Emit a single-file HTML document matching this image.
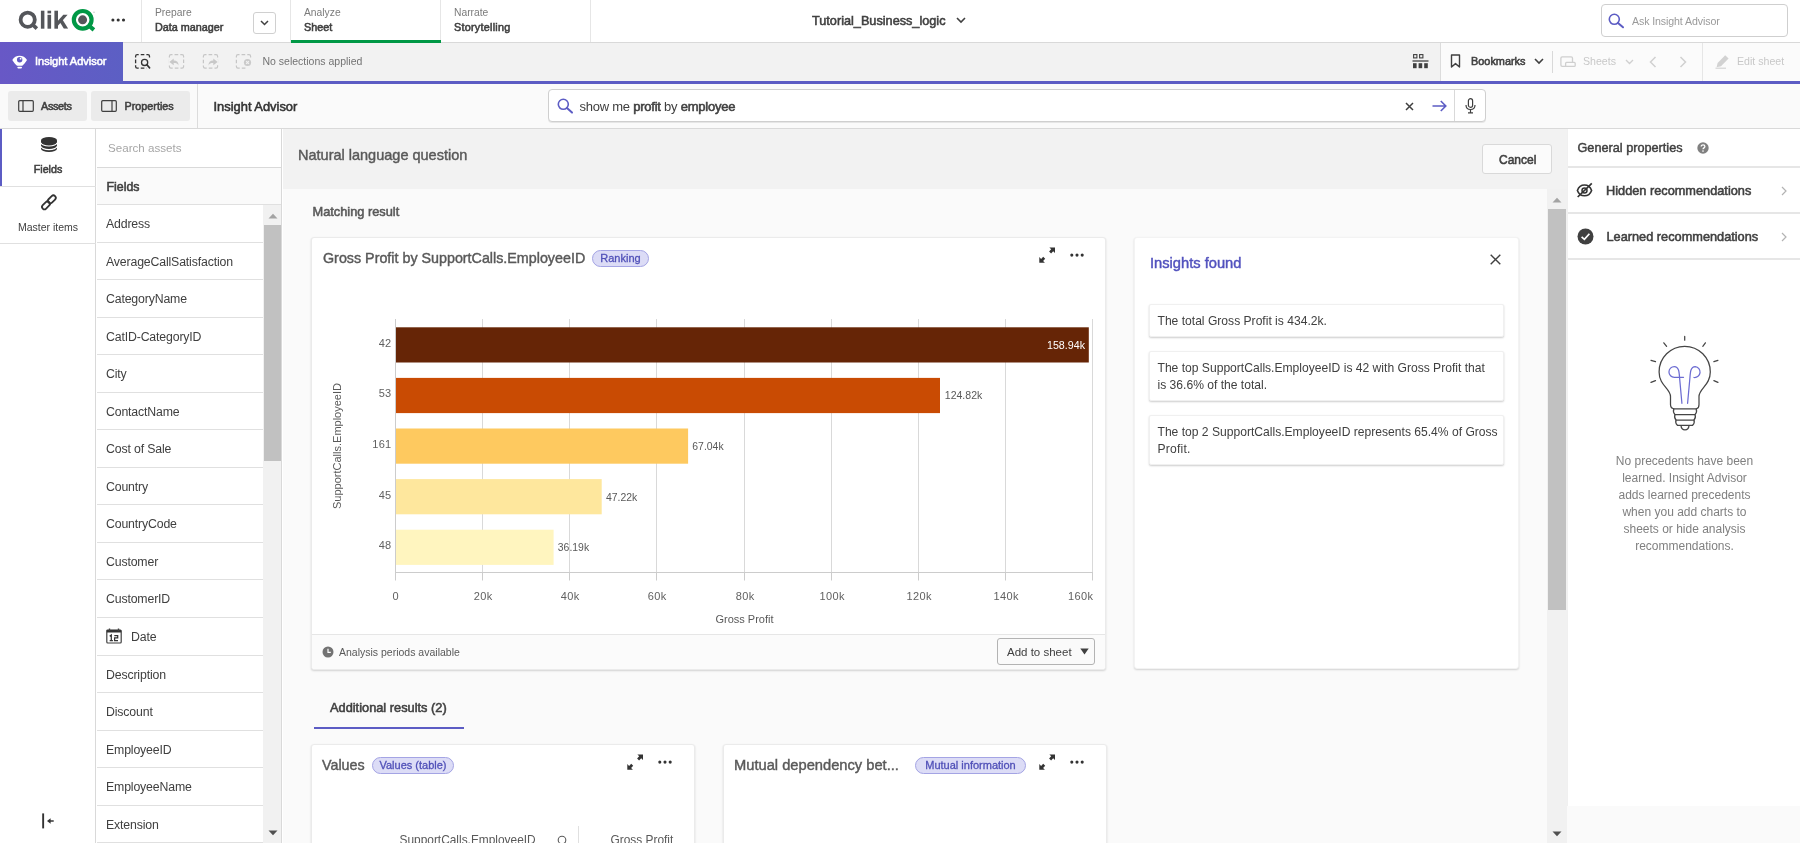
<!DOCTYPE html>
<html>
<head>
<meta charset="utf-8">
<title>Qlik Sense - Insight Advisor</title>
<style>
*{box-sizing:border-box;margin:0;padding:0}
html,body{width:1800px;height:843px;overflow:hidden;background:#fff}
body{font-family:"Liberation Sans",sans-serif;font-size:12px;color:#404040;position:relative}
#wrap{position:absolute;left:0;top:0;width:1800px;height:843px;will-change:transform}
.a{position:absolute}
.t{position:absolute;white-space:nowrap;line-height:1}
.b,.t b{font-weight:normal;-webkit-text-stroke:.55px}
svg{position:absolute;overflow:visible}
/* top bar */
#top{left:0;top:0;width:1800px;height:43px;background:#fff;border-bottom:1px solid #d9d9d9}
.vs{position:absolute;top:0;width:1px;height:42px;background:#e6e6e6}
/* toolbar */
#tb{left:0;top:43px;width:1800px;height:38px;background:#f2f2f2}
#pl{left:0;top:81px;width:1800px;height:3px;background:#5c5cc4}
#ia{left:0;top:42px;width:123px;height:42px;background:linear-gradient(90deg,#6858c6,#5c5fc4)}
/* third bar */
#b3{left:0;top:84px;width:1800px;height:45px;background:#fafafa;border-bottom:1px solid #d9d9d9}
.btn3{position:absolute;top:91px;height:30px;background:#ebebeb;border-radius:3px}
/* left nav */
#nav{left:0;top:129px;width:96px;height:714px;background:#fff;border-right:1px solid #d9d9d9}
#assets{left:97px;top:129px;width:185px;height:714px;background:#fff;border-right:1px solid #d9d9d9}
.row{position:absolute;left:97px;width:166px;border-bottom:1px solid #e0e0e0}
.row span{position:absolute;left:9px;top:13px;font-size:12.3px;line-height:1;color:#404040;white-space:nowrap;letter-spacing:-0.15px}
/* main */
#main{left:283px;top:129px;width:1284px;height:714px;background:#fafafa}
#nlq{left:283px;top:129px;width:1284px;height:60px;background:#f2f2f2}
.card{position:absolute;background:#fff;border:1px solid #ebebeb;border-radius:3px;box-shadow:0 1px 2px rgba(0,0,0,.16)}
.badge{position:absolute;height:16.5px;border:1px solid #a4a4e4;background:#dcdcf6;border-radius:9px;color:#5050b8;font-size:11px;line-height:14.5px;text-align:center;white-space:nowrap;-webkit-text-stroke:.3px}
/* right panel */
#right{left:1567px;top:129px;width:233px;height:714px;background:#fff;border-left:1px solid #f0f0f0}
</style>
</head>
<body>
<div id="wrap">
<!-- TOP BAR -->
<div class="a" id="top"></div>
<div class="vs" style="left:141px"></div>
<div class="vs" style="left:290px"></div>
<div class="vs" style="left:440px"></div>
<div class="vs" style="left:590px"></div>
<!-- Qlik logo -->
<svg style="left:0;top:0" width="130" height="42" viewBox="0 0 130 42">
<defs><clipPath id="kc"><rect x="54" y="10.7" width="15" height="18"/></clipPath></defs>
<g fill="#54565a">
<circle cx="27.700" cy="19.700" r="7.100" fill="none" stroke="#54565a" stroke-width="3.800"/>
<path d="M30.600 25.200 L33.400 22.700 L38.100 27.300 L35.600 30 Z"/>
<rect x="40.900" y="10.700" width="3.500" height="18"/>
<rect x="47.500" y="10.700" width="3.600" height="2.700"/><rect x="47.500" y="14.800" width="3.600" height="13.900"/>
<rect x="54.400" y="10.700" width="3.600" height="18"/>
<g clip-path="url(#kc)"><path d="M57.500 21.300 L63.300 14.800 H67.600 L57.500 26.200 Z"/><path d="M59.800 22 L62.300 19.200 L68.200 28.700 H63.900 Z"/></g>
</g>
<circle cx="82.700" cy="19.850" r="8.850" fill="none" stroke="#009845" stroke-width="4.200"/>
<path d="M87.600 27.200 L90.400 24.300 L95.200 28.300 L92.600 31.400 Z" fill="#009845"/>
<circle cx="82.600" cy="19.850" r="4.500" fill="#54565a"/>
<circle cx="94" cy="12.200" r="0.800" fill="#c8c8c8"/>
</svg>
<svg style="left:111px;top:18px" width="14" height="4" viewBox="0 0 14 4"><circle cx="1.9" cy="2" r="1.55" fill="#333"/><circle cx="7.2" cy="2" r="1.55" fill="#333"/><circle cx="12.5" cy="2" r="1.55" fill="#333"/></svg>
<!-- tabs -->
<div class="t" style="left:155px;top:7.5px;font-size:10.3px;color:#7b7b7b">Prepare</div>
<div class="t b" style="left:155px;top:21.5px;font-size:10.8px;color:#404040">Data manager</div>
<div class="a" style="left:253px;top:12px;width:23px;height:22px;border:1px solid #d0d0d0;border-radius:3px;background:#fff"></div>
<svg style="left:260px;top:20px" width="9" height="6" viewBox="0 0 9 6"><path d="M1 1 L4.5 4.5 L8 1" fill="none" stroke="#404040" stroke-width="1.5"/></svg>
<div class="t" style="left:304px;top:7.5px;font-size:10.3px;color:#7b7b7b">Analyze</div>
<div class="t b" style="left:304px;top:21.5px;font-size:10.8px;color:#404040">Sheet</div>
<div class="a" style="left:291px;top:40px;width:150px;height:3px;background:#009845"></div>
<div class="t" style="left:454px;top:7.5px;font-size:10.3px;color:#7b7b7b">Narrate</div>
<div class="t b" style="left:454px;top:21.5px;font-size:10.8px;color:#404040;letter-spacing:.26px">Storytelling</div>
<div class="t b" style="left:812px;top:14.5px;font-size:12.7px;color:#404040">Tutorial_Business_logic</div>
<svg style="left:956px;top:17px" width="10" height="7" viewBox="0 0 10 7"><path d="M1 1 L5 5 L9 1" fill="none" stroke="#404040" stroke-width="1.6"/></svg>
<!-- ask box -->
<div class="a" style="left:1601px;top:4px;width:187px;height:33px;border:1px solid #cfcfcf;border-radius:4px;background:#fff"></div>
<svg style="left:1608px;top:13px" width="16" height="15" viewBox="0 0 16 15"><circle cx="6.3" cy="6.3" r="5" fill="none" stroke="#5c5cc4" stroke-width="1.6"/><path d="M10 10 L15 14.3" stroke="#5c5cc4" stroke-width="2" stroke-linecap="round"/></svg>
<div class="t" style="left:1632px;top:16px;font-size:10.6px;letter-spacing:-.1px;color:#9a9a9a">Ask Insight Advisor</div>

<!-- TOOLBAR -->
<div class="a" id="tb"></div>
<div class="a" id="pl"></div>
<div class="a" id="ia"></div>
<svg style="left:12px;top:54px" width="16" height="15" viewBox="12 54 16 15"><path d="M12.300 60 C15 54.200 24.200 54.200 27 60 C25.600 62.800 23.500 64.300 22.300 65.800 H17 C15.800 64.300 13.700 62.800 12.300 60 Z" fill="#fff"/><circle cx="19.650" cy="59.700" r="2.700" fill="#6159c5"/><circle cx="20.600" cy="58.700" r="0.900" fill="#fff"/><rect x="17.300" y="66.700" width="4.700" height="1.700" rx="0.800" fill="#fff"/></svg>
<div class="t b" style="left:35px;top:56px;font-size:11px;color:#fff">Insight Advisor</div>
<!-- selection icons -->
<svg style="left:134px;top:53px" width="18" height="17" viewBox="134 53 18 17"><rect x="135.600" y="54.600" width="13.900" height="13.600" rx="1.600" fill="none" stroke="#333" stroke-width="1.300" pathLength="60" stroke-dasharray="6 2.400 4.200 2.400" stroke-dashoffset="4.250"/><rect x="146.300" y="58" width="5" height="12" fill="#f2f2f2"/><circle cx="144.600" cy="62.400" r="4.600" fill="#f2f2f2"/><circle cx="144.600" cy="62.400" r="3.100" fill="none" stroke="#333" stroke-width="1.300"/><path d="M146.900 64.800 L149.600 67.900" stroke="#333" stroke-width="1.600" stroke-linecap="round"/></svg>
<svg style="left:168px;top:53px" width="18" height="17" viewBox="0 0 18 17"><rect x="1.400" y="1.600" width="14.200" height="13.600" rx="1.600" fill="none" stroke="#c6c6c6" stroke-width="1.200" pathLength="60" stroke-dasharray="6 2.400 4.200 2.400" stroke-dashoffset="4.250"/><rect x="0.500" y="6.300" width="2" height="5.400" fill="#f2f2f2"/><path d="M1.400 9 L5.700 5.600 V7.600 C9 7.600 10.500 9.200 10.500 12.400 C9.500 10.600 8.400 10 5.700 10 V12.200 Z" fill="#c8c8c8"/></svg>
<svg style="left:202px;top:53px" width="18" height="17" viewBox="0 0 18 17"><rect x="1.400" y="1.600" width="14.200" height="13.600" rx="1.600" fill="none" stroke="#c6c6c6" stroke-width="1.200" pathLength="60" stroke-dasharray="6 2.400 4.200 2.400" stroke-dashoffset="4.250"/><rect x="14.500" y="6.300" width="2" height="5.400" fill="#f2f2f2"/><path d="M15.600 9 L11.300 5.600 V7.600 C8 7.600 6.500 9.200 6.500 12.400 C7.500 10.600 8.600 10 11.300 10 V12.200 Z" fill="#c8c8c8"/></svg>
<svg style="left:235px;top:53px" width="18" height="17" viewBox="0 0 18 17"><rect x="1.400" y="1.600" width="14.200" height="13.600" rx="1.600" fill="none" stroke="#c6c6c6" stroke-width="1.200" pathLength="60" stroke-dasharray="6 2.400 4.200 2.400" stroke-dashoffset="4.250"/><rect x="12" y="5.500" width="5" height="11" fill="#f2f2f2"/><circle cx="12.500" cy="9.500" r="3.600" fill="#cacaca"/><path d="M11.100 8.100 L13.900 10.900 M13.900 8.100 L11.100 10.900" stroke="#f2f2f2" stroke-width="1.100"/></svg>
<div class="t" style="left:262.5px;top:56px;font-size:10.5px;color:#737373">No selections applied</div>
<!-- right part of toolbar -->
<svg style="left:1412px;top:54px" width="17" height="15" viewBox="0 0 17 15"><rect x="1.6" y="0.6" width="3.3" height="3.3" fill="none" stroke="#404040" stroke-width="1.1"/><rect x="7.6" y="0.6" width="3.3" height="3.3" fill="none" stroke="#404040" stroke-width="1.1"/><path d="M0.5 7 H16.5" stroke="#404040" stroke-width="1.3"/><rect x="1" y="9.2" width="3.6" height="5" fill="#404040"/><rect x="6.6" y="9.2" width="3.6" height="5" fill="#404040"/><rect x="12.2" y="9.2" width="3.6" height="5" fill="#404040"/></svg>
<div class="a" style="left:1440px;top:43px;width:360px;height:38px;background:#fbfbfb;border-left:1px solid #dcdcdc"></div>
<svg style="left:1450px;top:54px" width="12" height="15" viewBox="0 0 12 15"><path d="M1.5 1 H9.5 V13 L5.5 9.6 L1.5 13 Z" fill="none" stroke="#404040" stroke-width="1.4" stroke-linejoin="round"/></svg>
<div class="t b" style="left:1471px;top:56px;font-size:10.9px;color:#404040">Bookmarks</div>
<svg style="left:1534px;top:58px" width="10" height="7" viewBox="0 0 10 7"><path d="M1 1 L5 5 L9 1" fill="none" stroke="#404040" stroke-width="1.6"/></svg>
<div class="a" style="left:1552px;top:51px;width:1px;height:22px;background:#d9d9d9"></div>
<svg style="left:1560px;top:55.500px" width="16" height="12" viewBox="0 0 16 12"><rect x="0.900" y="0.900" width="11.600" height="9.500" rx="1.300" fill="none" stroke="#cfcfcf" stroke-width="1.300"/><rect x="5.600" y="6.400" width="9.600" height="4" rx="1" fill="#fbfbfb" stroke="#cfcfcf" stroke-width="1.300"/></svg>
<div class="t" style="left:1583px;top:56px;font-size:10.6px;color:#c8c8c8">Sheets</div>
<svg style="left:1625px;top:59px" width="9" height="6" viewBox="0 0 9 6"><path d="M1 1 L4.5 4.5 L8 1" fill="none" stroke="#d0d0d0" stroke-width="1.4"/></svg>
<svg style="left:1649px;top:56px" width="8" height="12" viewBox="0 0 8 12"><path d="M6.5 1 L1.5 6 L6.5 11" fill="none" stroke="#d0d0d0" stroke-width="1.5"/></svg>
<svg style="left:1679px;top:56px" width="8" height="12" viewBox="0 0 8 12"><path d="M1.5 1 L6.5 6 L1.5 11" fill="none" stroke="#d0d0d0" stroke-width="1.5"/></svg>
<div class="a" style="left:1702px;top:43px;width:1px;height:38px;background:#e6e6e6"></div>
<svg style="left:1715px;top:54px" width="15" height="15" viewBox="0 0 15 15"><path d="M2.600 9 L10.200 1.200 L13.600 4.600 L6 12.200 L1.600 13.200 Z" fill="#d2d2d2"/><path d="M0.500 14.200 H11" stroke="#d2d2d2" stroke-width="1.100"/></svg>
<div class="t" style="left:1737px;top:56px;font-size:10.6px;color:#c8c8c8">Edit sheet</div>

<!-- THIRD BAR -->
<div class="a" id="b3"></div>
<div class="btn3" style="left:8px;width:79px"></div>
<div class="btn3" style="left:91px;width:99px"></div>
<svg style="left:18px;top:100px" width="16" height="12" viewBox="0 0 16 12"><rect x="0.7" y="0.7" width="14.6" height="10.6" rx="1" fill="none" stroke="#404040" stroke-width="1.2"/><path d="M5 0.7 V11.3" stroke="#404040" stroke-width="1.2"/></svg>
<div class="t b" style="left:41px;top:100.75px;font-size:10.8px;color:#404040;letter-spacing:-.3px">Assets</div>
<svg style="left:101px;top:100px" width="16" height="12" viewBox="0 0 16 12"><rect x="0.7" y="0.7" width="14.6" height="10.6" rx="1" fill="none" stroke="#404040" stroke-width="1.2"/><path d="M11 0.7 V11.3" stroke="#404040" stroke-width="1.2"/></svg>
<div class="t b" style="left:124.5px;top:100.75px;font-size:10.8px;color:#404040">Properties</div>
<div class="a" style="left:197px;top:84px;width:1px;height:44px;background:#dcdcdc"></div>
<div class="t b" style="left:213.5px;top:100.5px;font-size:12.9px;color:#333">Insight Advisor</div>
<!-- search box -->
<div class="a" style="left:548px;top:89px;width:938px;height:33px;border:1px solid #cfcfcf;border-radius:4px;background:#fff;box-shadow:0 1px 0 rgba(0,0,0,.08)"></div>
<svg style="left:557px;top:98px" width="16" height="16" viewBox="0 0 16 16"><circle cx="6.3" cy="6.3" r="5" fill="none" stroke="#5c5cc4" stroke-width="1.6"/><path d="M10 10 L15 14.6" stroke="#5c5cc4" stroke-width="2" stroke-linecap="round"/></svg>
<div class="t" style="left:579.5px;top:100px;font-size:13px;letter-spacing:-.24px;color:#404040">show me <b>profit</b> by <b>employee</b></div>
<svg style="left:1405px;top:102px" width="9" height="9" viewBox="0 0 9 9"><path d="M1 1 L8 8 M8 1 L1 8" stroke="#404040" stroke-width="1.5"/></svg>
<svg style="left:1432px;top:100px" width="15" height="12" viewBox="0 0 15 12"><path d="M0.5 6 H13.5 M8.8 1 L13.8 6 L8.8 11" fill="none" stroke="#5c5cc4" stroke-width="1.6"/></svg>
<div class="a" style="left:1454px;top:90px;width:1px;height:31px;background:#d9d9d9"></div>
<svg style="left:1465px;top:98px" width="11" height="16" viewBox="0 0 11 16"><rect x="3.4" y="0.7" width="4.2" height="8.6" rx="2.1" fill="none" stroke="#404040" stroke-width="1.2"/><path d="M1 7 C1 13 10 13 10 7 M5.5 11.6 V14.6 M3 14.8 H8" fill="none" stroke="#404040" stroke-width="1.2"/></svg>

<!-- LEFT NAV -->
<div class="a" id="nav"></div>
<div class="a" id="assets"></div>
<!-- nav items -->
<div class="a" style="left:0;top:129px;width:96px;height:58px;border-bottom:1px solid #e0e0e0"></div>
<div class="a" style="left:0;top:129px;width:2px;height:57px;background:#5c5cc4"></div>
<svg style="left:41px;top:136.500px" width="16" height="15" viewBox="0 0 15.500 14.500"><path d="M0 3.200 A7.750 3.200 0 0 1 15.500 3.200 V11.300 A7.750 3.200 0 0 1 0 11.300 Z" fill="#333"/><path d="M0 5.500 A7.750 3.200 0 0 0 15.500 5.500 M0 9 A7.750 3.200 0 0 0 15.500 9" fill="none" stroke="#fff" stroke-width="1.200"/></svg>
<div class="t b" style="left:0;top:164px;width:96px;text-align:center;font-size:10.7px;color:#404040">Fields</div>
<div class="a" style="left:0;top:187px;width:96px;height:57px;border-bottom:1px solid #e0e0e0"></div>
<svg style="left:40px;top:193px" width="18" height="18" viewBox="40 193 18 18"><g fill="none" stroke="#333" stroke-width="1.800"><rect x="-4.600" y="-2.400" width="9.200" height="4.800" rx="2.400" transform="translate(46,205.300) rotate(-45)"/><rect x="-4.600" y="-2.400" width="9.200" height="4.800" rx="2.400" transform="translate(51.800,199.400) rotate(-45)"/></g></svg>
<div class="t" style="left:0;top:222px;width:96px;text-align:center;font-size:10.5px;color:#404040">Master items</div>
<svg style="left:41px;top:813px" width="14" height="16" viewBox="41 813 14 16"><path d="M43.150 813.400 V828.400" stroke="#333" stroke-width="1.900"/><path d="M49 821 H53.700" stroke="#333" stroke-width="1.500"/><path d="M47 821 L50.600 818.200 V823.800 Z" fill="#333"/></svg>
<!-- assets -->
<div class="t" style="left:108px;top:142px;font-size:11.6px;color:#a6a6a6">Search assets</div>
<div class="a" style="left:97px;top:167px;width:184px;height:1px;background:#d9d9d9"></div>
<div class="a" style="left:97px;top:168px;width:184px;height:37px;background:#fafafa;border-bottom:1px solid #e0e0e0"></div>
<div class="t b" style="left:106.500px;top:180.75px;font-size:12.4px;color:#404040">Fields</div>
<div class="a" style="left:263px;top:205px;width:18px;height:638px;background:#f1f1f1"></div>
<div class="a" style="left:264px;top:225px;width:17px;height:236px;background:#c1c1c1"></div>
<svg style="left:267.500px;top:212.500px" width="10" height="6" viewBox="0 0 10 6"><path d="M0.5 5.5 L5 0.8 L9.5 5.5 Z" fill="#a3a3a3"/></svg>
<svg style="left:267.500px;top:829.500px" width="10" height="6" viewBox="0 0 10 6"><path d="M0.5 0.5 L5 5.2 L9.5 0.5 Z" fill="#505050"/></svg>
<div class="row" style="top:205px;height:38px"><span>Address</span></div>
<div class="row" style="top:243px;height:37px"><span>AverageCallSatisfaction</span></div>
<div class="row" style="top:280px;height:38px"><span>CategoryName</span></div>
<div class="row" style="top:318px;height:37px"><span>CatID-CategoryID</span></div>
<div class="row" style="top:355px;height:38px"><span>City</span></div>
<div class="row" style="top:393px;height:37px"><span>ContactName</span></div>
<div class="row" style="top:430px;height:38px"><span>Cost of Sale</span></div>
<div class="row" style="top:468px;height:37px"><span>Country</span></div>
<div class="row" style="top:505px;height:38px"><span>CountryCode</span></div>
<div class="row" style="top:543px;height:37px"><span>Customer</span></div>
<div class="row" style="top:580px;height:38px"><span>CustomerID</span></div>
<div class="row" style="top:618px;height:38px"><svg style="left:9px;top:10px" width="16" height="16" viewBox="0 0 16 16"><rect x="0.8" y="2" width="14.4" height="13" rx="1" fill="none" stroke="#404040" stroke-width="1.2"/><path d="M0.8 3.200 H15.2" stroke="#333" stroke-width="2.600"/><path d="M3.5 0.5 V3 M12.5 0.5 V3" stroke="#404040" stroke-width="1.4"/><path d="M3.700 8.300 L5.300 7.100 V12.500 M3.700 12.600 H6.900 M8.300 7.500 H11.700 V9.900 H8.600 V12.500 H12" fill="none" stroke="#333" stroke-width="1.250"/></svg><span style="left:34px">Date</span></div>
<div class="row" style="top:656px;height:37px"><span>Description</span></div>
<div class="row" style="top:693px;height:38px"><span>Discount</span></div>
<div class="row" style="top:731px;height:37px"><span>EmployeeID</span></div>
<div class="row" style="top:768px;height:38px"><span>EmployeeName</span></div>
<div class="row" style="top:806px;height:37px"><span>Extension</span></div>

<!-- MAIN -->
<div class="a" id="main"></div>
<div class="a" id="nlq"></div>
<div class="t" style="left:298px;top:148px;font-size:14.5px;color:#595959;-webkit-text-stroke:.42px">Natural language question</div>
<div class="a" style="left:1482px;top:144px;width:70px;height:30px;border:1px solid #d9d9d9;border-radius:3px;background:#fbfbfb"></div>
<div class="t b" style="left:1499px;top:153.75px;font-size:12.0px;color:#404040">Cancel</div>
<!-- main scrollbar -->
<div class="a" style="left:1547px;top:189px;width:20px;height:654px;background:#f1f1f1"></div>
<div class="a" style="left:1548px;top:209px;width:18px;height:401px;background:#c1c1c1"></div>
<svg style="left:1552px;top:196.500px" width="10" height="6" viewBox="0 0 10 6"><path d="M0.5 5.5 L5 0.8 L9.5 5.5 Z" fill="#a3a3a3"/></svg>
<svg style="left:1552px;top:830.500px" width="10" height="6" viewBox="0 0 10 6"><path d="M0.5 0.5 L5 5.2 L9.5 0.5 Z" fill="#505050"/></svg>
<div class="t b" style="left:312.5px;top:206px;font-size:12.8px;color:#595959">Matching result</div>
<!-- chart card -->
<div class="card" style="left:311px;top:237px;width:795px;height:433px"></div>
<div class="t" style="left:323px;top:250.5px;font-size:14.3px;color:#595959;-webkit-text-stroke:.42px">Gross Profit by SupportCalls.EmployeeID</div>
<div class="badge" style="left:592px;top:250px;width:57px">Ranking</div>
<svg style="left:1039px;top:247px" width="16" height="16" viewBox="0 0 16 16"><g fill="#333"><path d="M10.4 0.5 H16 V6.100 L14.200 4.300 L12.100 6.500 L10.100 4.500 L12.200 2.300 Z"/><path d="M5.900 15.700 H0.300 V10.100 L2.100 11.900 L4.200 9.700 L6.200 11.700 L4.100 13.900 Z"/></g></svg>
<svg style="left:1070px;top:253px" width="14" height="4" viewBox="0 0 14 4"><circle cx="1.8" cy="2.100" r="1.55" fill="#333"/><circle cx="7" cy="2.100" r="1.55" fill="#333"/><circle cx="12.200" cy="2.100" r="1.55" fill="#333"/></svg>
<!-- chart -->
<svg style="left:312px;top:300px" width="793" height="334" viewBox="312 300 793 334" font-family="Liberation Sans, sans-serif" font-size="11" fill="#595959">
<g stroke="#d9d9d9" stroke-width="1">
<path d="M482.5 319 V572 M569.5 319 V572 M656.5 319 V572 M744.5 319 V572 M831.5 319 V572 M918.5 319 V572 M1005.5 319 V572 M1092.5 319 V572"/>
</g>
<rect x="396" y="327.300" width="692.800" height="35.200" fill="#662506"/>
<rect x="396" y="377.900" width="544.000" height="35.200" fill="#c94b03"/>
<rect x="396" y="428.500" width="292.100" height="35.200" fill="#fec95f"/>
<rect x="396" y="479.100" width="205.700" height="35.200" fill="#fee79d"/>
<rect x="396" y="529.700" width="157.600" height="35.200" fill="#fff5bf"/>
<path d="M395.5 319 V580.500 M395.5 572.5 H1093 M482.5 572 V580.500 M569.5 572 V580.500 M656.5 572 V580.500 M744.5 572 V580.500 M831.5 572 V580.500 M918.5 572 V580.500 M1005.5 572 V580.500 M1092.5 572 V580.500" stroke="#cccccc" stroke-width="1" fill="none"/>
<g text-anchor="end" letter-spacing=".3" fill="#616161"><text x="391.500" y="346.800">42</text><text x="391.500" y="397.400">53</text><text x="391.500" y="448">161</text><text x="391.500" y="498.600">45</text><text x="391.500" y="549.300">48</text></g>
<g text-anchor="middle" letter-spacing=".4" fill="#616161"><text x="395.700" y="599.500">0</text><text x="483.200" y="599.500">20k</text><text x="570.200" y="599.500">40k</text><text x="657.200" y="599.500">60k</text><text x="745.200" y="599.500">80k</text><text x="832.200" y="599.500">100k</text><text x="919.200" y="599.500">120k</text><text x="1006.200" y="599.500">140k</text></g>
<text x="1093.500" y="599.500" text-anchor="end" letter-spacing=".4" fill="#616161">160k</text>
<text x="1047" y="349" fill="#fff" textLength="38" lengthAdjust="spacingAndGlyphs">158.94k</text>
<text x="944.800" y="399.300" textLength="37.5" lengthAdjust="spacingAndGlyphs">124.82k</text><text x="692.300" y="450" textLength="31.3" lengthAdjust="spacingAndGlyphs">67.04k</text><text x="606" y="500.500" textLength="31.3" lengthAdjust="spacingAndGlyphs">47.22k</text><text x="557.800" y="551.200" textLength="31.3" lengthAdjust="spacingAndGlyphs">36.19k</text>
<text x="744.500" y="623" text-anchor="middle" font-family="Liberation Sans, sans-serif" font-size="11">Gross Profit</text>
<text transform="translate(341,446) rotate(-90)" text-anchor="middle" font-family="Liberation Sans, sans-serif" font-size="11">SupportCalls.EmployeeID</text>
</svg>
<!-- card footer -->
<div class="a" style="left:312px;top:634px;width:793px;height:35px;background:#fbfbfb;border-top:1px solid #e6e6e6;border-radius:0 0 3px 3px"></div>
<svg style="left:322px;top:646px" width="12" height="12" viewBox="0 0 12 12"><circle cx="6" cy="6" r="5.5" fill="#737373"/><path d="M6 2.8 V6.3 H8.8" fill="none" stroke="#fff" stroke-width="1.2"/></svg>
<div class="t" style="left:339px;top:646.75px;font-size:10.5px;color:#595959">Analysis periods available</div>
<div class="a" style="left:997px;top:638px;width:98px;height:27px;border:1px solid #b3b3b3;border-radius:3px;background:#fafafa"></div>
<div class="t" style="left:1007px;top:646.5px;font-size:11.5px;color:#404040">Add to sheet</div>
<svg style="left:1080px;top:648px" width="9" height="7" viewBox="0 0 9 7"><path d="M0.3 0.5 H8.7 L4.5 6.5 Z" fill="#404040"/></svg>
<!-- insights card -->
<div class="card" style="left:1134px;top:237px;width:385px;height:432px;border-color:#f3f3f3"></div>
<div class="t" style="left:1150px;top:256px;font-size:14.7px;color:#5252be;-webkit-text-stroke:.45px">Insights found</div>
<svg style="left:1490px;top:254px" width="11" height="11" viewBox="0 0 11 11"><path d="M0.7 0.7 L10.3 10.3 M10.3 0.7 L0.7 10.3" stroke="#404040" stroke-width="1.4"/></svg>
<div class="card" style="left:1149px;top:304px;width:355px;height:33px;border-radius:2px;border-color:#f0f0f0;box-shadow:0 1px 2px rgba(0,0,0,.2)"></div>
<div class="t" style="left:1157.5px;top:315px;font-size:12.1px;color:#404040">The total Gross Profit is 434.2k.</div>
<div class="card" style="left:1149px;top:351px;width:355px;height:50px;border-radius:2px;border-color:#f0f0f0;box-shadow:0 1px 2px rgba(0,0,0,.2)"></div>
<div class="t" style="left:1157.5px;top:362px;font-size:12.1px;color:#404040">The top SupportCalls.EmployeeID is 42 with Gross Profit that</div>
<div class="t" style="left:1157.5px;top:379px;font-size:12.1px;color:#404040">is 36.6% of the total.</div>
<div class="card" style="left:1149px;top:415px;width:355px;height:50px;border-radius:2px;border-color:#f0f0f0;box-shadow:0 1px 2px rgba(0,0,0,.2)"></div>
<div class="t" style="left:1157.5px;top:426px;font-size:12.1px;color:#404040">The top 2 SupportCalls.EmployeeID represents 65.4% of Gross</div>
<div class="t" style="left:1157.5px;top:443px;font-size:12.1px;color:#404040;letter-spacing:.22px">Profit.</div>
<!-- additional results -->
<div class="t b" style="left:330px;top:701.5px;font-size:12.8px;color:#404040">Additional results (2)</div>
<div class="a" style="left:314px;top:727px;width:150px;height:2px;background:#5c5cc4"></div>
<div class="card" style="left:311px;top:744px;width:384px;height:110px"></div>
<div class="t" style="left:322px;top:757.5px;font-size:14.3px;color:#595959;-webkit-text-stroke:.42px">Values</div>
<div class="badge" style="left:372px;top:757px;width:82px">Values (table)</div>
<svg style="left:627px;top:754px" width="16" height="16" viewBox="0 0 16 16"><g fill="#333"><path d="M10.4 0.5 H16 V6.100 L14.200 4.300 L12.100 6.500 L10.100 4.500 L12.200 2.300 Z"/><path d="M5.900 15.700 H0.300 V10.100 L2.100 11.900 L4.200 9.700 L6.200 11.700 L4.100 13.900 Z"/></g></svg>
<svg style="left:658px;top:760px" width="14" height="4" viewBox="0 0 14 4"><circle cx="1.8" cy="2.100" r="1.55" fill="#333"/><circle cx="7" cy="2.100" r="1.55" fill="#333"/><circle cx="12.200" cy="2.100" r="1.55" fill="#333"/></svg>
<div class="t" style="left:399.5px;top:834.5px;font-size:11.9px;color:#595959">SupportCalls.EmployeeID</div>
<svg style="left:556.5px;top:834.5px" width="11" height="11" viewBox="0 0 11 11"><circle cx="5" cy="5" r="3.8" fill="none" stroke="#595959" stroke-width="1.1"/><path d="M7.8 7.8 L10.5 10.5" stroke="#595959" stroke-width="1.3"/></svg>
<div class="a" style="left:578px;top:826px;width:1px;height:17px;background:#e0e0e0"></div>
<div class="t" style="left:610.5px;top:834.5px;font-size:11.9px;color:#595959">Gross Profit</div>
<div class="card" style="left:723px;top:744px;width:384px;height:110px"></div>
<div class="t" style="left:734px;top:757.5px;font-size:14.7px;color:#595959;-webkit-text-stroke:.42px">Mutual dependency bet...</div>
<div class="badge" style="left:915px;top:757px;width:111px">Mutual information</div>
<svg style="left:1039px;top:754px" width="16" height="16" viewBox="0 0 16 16"><g fill="#333"><path d="M10.4 0.5 H16 V6.100 L14.200 4.300 L12.100 6.500 L10.100 4.500 L12.200 2.300 Z"/><path d="M5.900 15.700 H0.300 V10.100 L2.100 11.900 L4.200 9.700 L6.200 11.700 L4.100 13.900 Z"/></g></svg>
<svg style="left:1070px;top:760px" width="14" height="4" viewBox="0 0 14 4"><circle cx="1.8" cy="2.100" r="1.55" fill="#333"/><circle cx="7" cy="2.100" r="1.55" fill="#333"/><circle cx="12.200" cy="2.100" r="1.55" fill="#333"/></svg>

<!-- RIGHT -->
<div class="a" id="right"></div>
<div class="a" style="left:1567px;top:806px;width:233px;height:37px;background:#fafafa"></div>
<div class="t" style="left:1577.5px;top:142px;font-size:12.7px;color:#404040;-webkit-text-stroke:.45px">General properties</div>
<svg style="left:1697px;top:142px" width="12" height="12" viewBox="0 0 12 12"><circle cx="6" cy="6" r="5.7" fill="#808080"/><path d="M4.2 4.6 C4.2 2.4 7.9 2.4 7.9 4.6 C7.9 5.9 6 5.9 6 7.3" fill="none" stroke="#fff" stroke-width="1.3"/><circle cx="6" cy="9.1" r="0.8" fill="#fff"/></svg>
<div class="a" style="left:1568px;top:166px;width:232px;height:2px;background:#e6e6e6"></div>
<svg style="left:1576px;top:182px" width="17" height="17" viewBox="1576 182 17 17"><path d="M1577.400 190.400 C1580 183.200 1589 183.200 1591.600 190.400 C1589 197.600 1580 197.600 1577.400 190.400 Z" fill="none" stroke="#333" stroke-width="1.600"/><circle cx="1584.500" cy="190.400" r="2.500" fill="none" stroke="#333" stroke-width="1.500"/><path d="M1577.700 197 L1591.800 183.400" stroke="#333" stroke-width="1.700"/></svg>
<div class="t b" style="left:1606px;top:184.5px;font-size:12.75px;color:#404040">Hidden recommendations</div>
<svg style="left:1781px;top:186px" width="6" height="10" viewBox="0 0 6 10"><path d="M1 1 L5 5 L1 9" fill="none" stroke="#b3b3b3" stroke-width="1.2"/></svg>
<div class="a" style="left:1568px;top:212px;width:232px;height:2px;background:#e6e6e6"></div>
<svg style="left:1577px;top:228px" width="17" height="17" viewBox="0 0 17 17"><circle cx="8.5" cy="8.5" r="8" fill="#404040"/><path d="M4.6 8.8 L7.4 11.4 L12.4 5.8" fill="none" stroke="#fff" stroke-width="1.7"/></svg>
<div class="t b" style="left:1606.5px;top:230.5px;font-size:12.75px;color:#404040">Learned recommendations</div>
<svg style="left:1781px;top:232px" width="6" height="10" viewBox="0 0 6 10"><path d="M1 1 L5 5 L1 9" fill="none" stroke="#b3b3b3" stroke-width="1.2"/></svg>
<div class="a" style="left:1568px;top:258px;width:232px;height:2px;background:#e6e6e6"></div>
<!-- lightbulb -->
<svg style="left:1648px;top:334px" width="74" height="98" viewBox="1648 334 74 98"><g fill="none" stroke="#454545" stroke-width="1.250" stroke-linecap="round" stroke-linejoin="round">
<path d="M1673.300 408.500 C1671.200 408.200 1670.500 406.500 1670.500 404.500 V396.500 C1670.500 388.500 1659.100 385.500 1659.100 371.900 A25.600 25.600 0 0 1 1710.300 371.900 C1710.300 385.500 1699 388.500 1699 396.500 V404.500 C1699 406.500 1698.300 408.200 1696.700 408.500" fill="#fff"/>
<path d="M1673.300 408.800 H1696.700 M1675 414.700 H1695 M1676 420 H1694 M1677.500 425.400 H1692.500"/>
<path d="M1673.800 409 Q1672.600 412 1675 414.700 Q1673.800 417.400 1676 420 Q1675 423 1677.500 425.400 M1696.200 409 Q1697.400 412 1695 414.700 Q1696.200 417.400 1694 420 Q1695 423 1692.500 425.400"/>
<path d="M1681 425.600 Q1681.400 429.800 1685 429.800 Q1688.600 429.800 1689 425.600"/>
<path d="M1684.700 336.400 V340.200 M1663.800 342.800 L1666.600 346.300 M1705.400 342.800 L1702.800 346.300 M1651 360.300 L1655.500 361.700 M1717.900 360.300 L1713.900 361.700 M1651 382.400 L1655.500 380.600 M1717.900 382.400 L1713.900 380.600"/>
</g>
<g fill="none" stroke="#6c6cd2" stroke-width="1.250" stroke-linecap="round"><path d="M1681.900 403.300 L1679.600 378 C1679.200 372 1678.800 366.600 1674.300 366.600 A5.300 5.300 0 0 0 1674.300 377.300 H1683.500"/><path d="M1687.600 403.300 L1689.900 378 C1690.300 372 1690.700 366.600 1695.200 366.600 A5.300 5.300 0 0 1 1694 377.500"/></g>
</svg>
<div class="a" style="left:1580px;top:453px;width:209px;text-align:center;font-size:12px;line-height:16.9px;color:#808080">No precedents have been<br>learned. Insight Advisor<br>adds learned precedents<br>when you add charts to<br>sheets or hide analysis<br>recommendations.</div>

</div>
</body>
</html>
